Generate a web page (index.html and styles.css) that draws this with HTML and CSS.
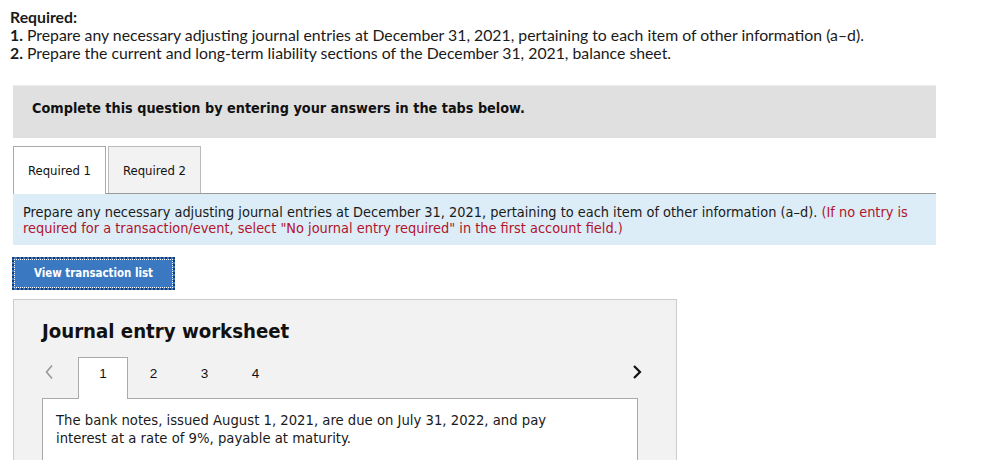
FILE: index.html
```html
<!DOCTYPE html>
<html>
<head>
<meta charset="utf-8">
<link rel="stylesheet" href="styles.css">
</head>
<body>
<div class="page">
  <div class="required">
    <div class="req-title">Required:</div>
    <div class="req-line"><b>1.</b> Prepare any necessary adjusting journal entries at December 31, 2021, pertaining to each item of other information (a–d).</div>
    <div class="req-line"><b>2.</b> Prepare the current and long-term liability sections of the December 31, 2021, balance sheet.</div>
  </div>

  <div class="banner">Complete this question by entering your answers in the tabs below.</div>

  <div class="tabs">
    <div class="tab active">Required 1</div>
    <div class="tab">Required 2</div>
  </div>

  <div class="instructions">Prepare any necessary adjusting journal entries at December 31, 2021, pertaining to each item of other information (a–d). <span class="red">(If no entry is<br>required for a transaction/event, select "No journal entry required" in the first account field.)</span></div>

  <div class="btn-row"><button class="btn">View transaction list</button></div>

  <div class="worksheet">
    <div class="ws-title">Journal entry worksheet</div>
    <div class="ws-nav">
      <span class="arrow left"><svg width="10" height="16" viewBox="0 0 10 16"><path d="M8 1.5 L2.5 8 L8 14.5" fill="none" stroke="#999" stroke-width="1.6"/></svg></span>
      <div class="ws-tabs">
        <div class="ws-tab active">1</div>
        <div class="ws-tab">2</div>
        <div class="ws-tab">3</div>
        <div class="ws-tab">4</div>
      </div>
      <span class="arrow right"><svg width="10" height="16" viewBox="0 0 10 16"><path d="M2 2 L8 8 L2 14" fill="none" stroke="#111" stroke-width="2.2"/></svg></span>
    </div>
    <div class="ws-body">The bank notes, issued August 1, 2021, are due on July 31, 2022, and pay<br>interest at a rate of 9%, payable at maturity.</div>
  </div>
</div>
</body>
</html>
```
FILE: styles.css
```css
html, body { margin: 0; padding: 0; background: #fff; }
body { overflow: hidden; height: 461px; }
.page { padding: 8px 0 0 10px; width: 926px; }

.required { font-family: Lato, "Liberation Sans", sans-serif; font-size: 15.8px; line-height: 18px; color: #1a1a1a; }
.req-title { font-weight: bold; }
.req-line b { font-weight: bold; }

.banner {
  margin: 23px 0 0 3px;
  background: #e0e0e0;
  height: 53px;
  box-sizing: border-box;
  padding: 14px 0 0 19px;
  font-family: "DejaVu Sans Condensed", "DejaVu Sans", sans-serif;
  font-weight: bold;
  font-size: 14.3px;
  color: #111;
  border-top: 1px solid #ececec;
}

.tabs {
  display: flex;
  margin: 8px 0 0 3px;
  border-bottom: 1px solid #999;
  height: 47px;
  align-items: flex-end;
}
.tab {
  font-family: "DejaVu Sans Condensed", "DejaVu Sans", sans-serif;
  font-size: 13px;
  color: #111;
  box-sizing: border-box;
  width: 93px;
  height: 47px;
  border: 1px solid #bbb;
  border-bottom: none;
  background: #f2f2f2;
  display: flex;
  align-items: center;
  justify-content: center;
  margin-right: 2px;
  padding-top: 1px;
}
.tab.active { background: #fff; border-color: #aaa; height: 48px; margin-bottom: -1px; padding-top: 0; }

.instructions {
  margin-left: 3px;
  background: #dcedf7;
  padding: 10px 10px 7px 10px;
  height: 51px;
  box-sizing: border-box;
  font-family: "DejaVu Sans Condensed", "DejaVu Sans", sans-serif;
  font-size: 14.4px;
  line-height: 16px;
  color: #1a1a1a;
  white-space: nowrap;
}
.red { color: #b0142c; }

.btn-row { margin-top: 12px; }
.btn {
  margin-left: 2px;
  width: 163px;
  height: 33px;
  background: #3b78c2;
  color: #fff;
  border: 2px dotted #1a3b66;
  outline: 1px dotted #fff;
  outline-offset: -3px;
  font-family: "DejaVu Sans Condensed", "DejaVu Sans", sans-serif;
  font-weight: bold;
  font-size: 11.4px;
  padding: 0 0 1px 0;
}

.worksheet {
  margin: 9px 0 0 3px;
  width: 664px;
  box-sizing: border-box;
  background: #f2f2f2;
  border: 1px solid #ccc;
  border-bottom: none;
  padding: 19px 38px 0 28px;
  height: 161px;
  overflow: hidden;
}
.ws-title {
  font-family: "DejaVu Sans Condensed", "DejaVu Sans", sans-serif;
  font-weight: bold;
  font-size: 20.2px;
  color: #111;
  line-height: 25px;
}
.ws-nav {
  display: flex;
  align-items: flex-start;
  margin-top: 13px;
  height: 41px;
}
.arrow { display: flex; align-items: center; height: 30px; }
.arrow.left { width: 36px; padding-left: 2px; box-sizing: border-box; }
.arrow.right { margin-left: auto; margin-right: -4px; }
.ws-tabs { display: flex; height: 41px; }
.ws-tab {
  font-family: "Liberation Sans", Arial, sans-serif;
  font-size: 13.5px;
  color: #111;
  width: 51px;
  height: 30px;
  box-sizing: border-box;
  display: flex;
  align-items: center;
  justify-content: center;
  padding-top: 2px;
}
.ws-tab.active {
  background: #fff;
  border: 1px solid #aaa;
  border-bottom: none;
  width: 50px;
  position: relative;
  z-index: 1;
  height: 42px;
  align-items: flex-start;
  padding-top: 8px;
}
.ws-body {
  background: #fff;
  border: 1px solid #aaa;
  border-bottom: none;
  padding: 12px 13px 0 13px;
  height: 80px;
  font-family: "DejaVu Sans Condensed", "DejaVu Sans", sans-serif;
  font-size: 14.7px;
  line-height: 18px;
  color: #1a1a1a;
}
```
